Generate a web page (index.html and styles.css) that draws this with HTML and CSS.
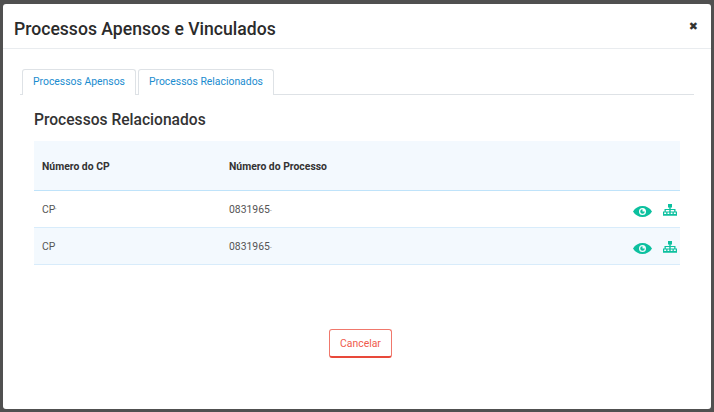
FILE: index.html
```html
<!DOCTYPE html>
<html lang="pt">
<head>
<meta charset="utf-8">
<title>Processos Apensos e Vinculados</title>
<link rel="stylesheet" href="styles.css">
</head>
<body>
<div class="modal">
  <header class="modal-header">
    <h1 class="modal-title">Processos Apensos e Vinculados</h1>
    <span class="close">✖</span>
  </header>
  <div class="modal-body">
    <nav class="tabs">
      <a class="tab">Processos Apensos</a>
      <a class="tab active">Processos Relacionados</a>
    </nav>
    <section class="pane">
      <h2 class="pane-title">Processos Relacionados</h2>
      <div class="table">
        <div class="row head">
          <div class="c1">Número do CP</div>
          <div class="c2">Número do Processo</div>
        </div>
        <div class="row">
          <div class="c1">CP<span class="mark">'</span></div>
          <div class="c2">0831965<span class="mark">-</span></div>
          <div class="actions">
            <svg class="eye" viewBox="0 0 19 11"><path fill-rule="evenodd" d="M0 5.500C2.200 1.900 5.600 0 9.500 0S16.800 1.900 19 5.500C16.800 9.100 13.400 11 9.500 11S2.200 9.100 0 5.500zM9.500 2a3.500 3.500 0 1 0 0 7 3.500 3.500 0 0 0 0-7z"/><path d="M9.500 3.200a2.300 2.300 0 1 0 2.300 2.300H9.500z"/></svg>
            <svg class="tree" viewBox="0 0 14 12"><path d="M5 0h4v3.500H5zM6.300 3.500h1.400V5H6.300zM1.500 5h11v1.100h-11zM1.500 6h1.300v1.500H1.500zM6.300 6h1.400v1.500H6.300zM11.200 6h1.300v1.500h-1.300zM0 7.500h14v1H0zM0 8.500h1.200V10H0zM3.200 8.500h1.300V10H3.200zM6.300 8.500h1.400V10H6.300zM9.500 8.500h1.300V10H9.500zM12.800 8.500H14V10h-1.200zM0 10h14v1.800H0z"/></svg>
          </div>
        </div>
        <div class="row alt">
          <div class="c1">CP</div>
          <div class="c2">0831965<span class="mark">-</span></div>
          <div class="actions">
            <svg class="eye" viewBox="0 0 19 11"><path fill-rule="evenodd" d="M0 5.500C2.200 1.900 5.600 0 9.500 0S16.800 1.900 19 5.500C16.800 9.100 13.400 11 9.500 11S2.200 9.100 0 5.500zM9.500 2a3.500 3.500 0 1 0 0 7 3.500 3.500 0 0 0 0-7z"/><path d="M9.500 3.200a2.300 2.300 0 1 0 2.300 2.300H9.500z"/></svg>
            <svg class="tree" viewBox="0 0 14 12"><path d="M5 0h4v3.500H5zM6.300 3.500h1.400V5H6.300zM1.500 5h11v1.100h-11zM1.500 6h1.300v1.500H1.500zM6.300 6h1.400v1.500H6.300zM11.200 6h1.300v1.500h-1.300zM0 7.500h14v1H0zM0 8.500h1.200V10H0zM3.200 8.500h1.300V10H3.200zM6.300 8.500h1.400V10H6.300zM9.500 8.500h1.300V10H9.500zM12.800 8.500H14V10h-1.200zM0 10h14v1.800H0z"/></svg>
          </div>
        </div>
      </div>
    </section>
    <div class="footer">
      <button class="btn-cancel">Cancelar</button>
    </div>
  </div>
</div>
</body>
</html>
```
FILE: styles.css
```css
* { box-sizing: border-box; }
html, body { height: 100%; }
body {
  margin: 0;
  padding: 4px 3px 3px;
  background: #505050;
  font-family: Roboto, "Liberation Sans", sans-serif;
  color: #333;
}
.modal {
  height: 405px;
  background: #fff;
  border-radius: 3px;
  display: flex;
  flex-direction: column;
}
.modal-header {
  height: 45px;
  flex: none;
  padding: 6px 13px 0 11px;
  border-bottom: 1px solid #e9ecef;
  display: flex;
  align-items: center;
  justify-content: space-between;
}
.modal-title {
  margin: 0;
  font-size: 17.600px;
  font-weight: 500;
  color: #2b2b2b;
}
.close {
  font: 700 11px "DejaVu Sans", sans-serif;
  color: #333;
  margin-bottom: 6px;
}
.modal-body { padding: 20px 17px 0 17px; }
.tabs {
  display: flex;
  gap: 2px;
  height: 26px;
  padding-left: 2px;
  border-bottom: 1px solid #dee2e6;
}
.tab {
  height: 26px;
  padding: 0 10px;
  font-size: 10.400px;
  line-height: 24px;
  color: #1a8ccf;
  background: #fff;
  border: 1px solid #dee2e6;
  border-bottom: 0;
  border-radius: 3px 3px 0 0;
}
.pane { padding: 15px 14px 0; }
.pane-title {
  margin: 0 0 11px;
  font-size: 15.600px;
  line-height: 20px;
  font-weight: 500;
  color: #333;
}
.table { font-size: 10.400px; }
.row {
  display: flex;
  align-items: center;
  height: 37px;
  padding-left: 8px;
  border-bottom: 1px solid #d8ecfb;
  color: #555;
}
.row.head {
  height: 50px;
  padding-top: 2px;
  background: #f3f9fe;
  font-weight: 700;
  color: #333;
  border-bottom-color: #bfe3fa;
}
.row.alt { background: #f3f9fe; }
.c1 { width: 187px; }
.c2 { flex: 1; }
.mark { font-size: 6px; vertical-align: 1px; }
.actions {
  display: flex;
  align-items: center;
  gap: 11px;
  padding: 4px 3px 0 0;
  fill: #0cc09f;
}
.eye { width: 19px; height: 11px; display: block; margin-left: -1px; }
.tree { width: 14px; height: 12px; display: block; margin-top: -2px; }
.footer {
  display: flex;
  justify-content: center;
  padding: 64px 0 0 7px;
}
.btn-cancel {
  width: 63px;
  height: 29px;
  padding: 0;
  background: #fff;
  color: #ef5a4c;
  font: 400 10.400px Roboto, sans-serif;
  border: 1px solid #f0786c;
  border-bottom: 2px solid #e8493a;
  border-radius: 3px;
}
```
